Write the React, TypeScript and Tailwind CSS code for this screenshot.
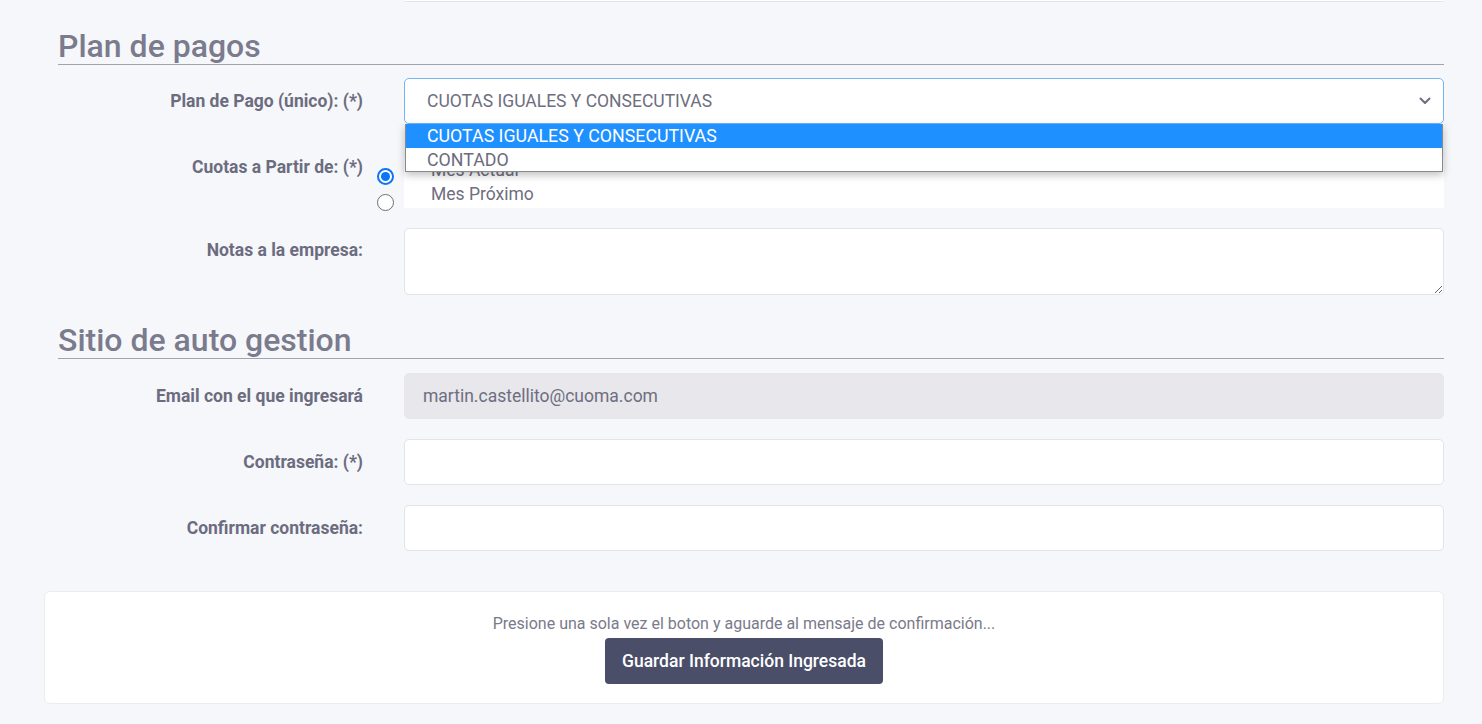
import React from 'react';

const labelCls = "w-[360px] shrink-0 pr-[41px] text-right text-[17.5px] font-bold leading-[24px] text-[#6c6c7f]";
const inputCls = "h-[46px] flex-1 rounded-[5px] border border-[#e3e3ea] bg-white px-[18px] text-[17.5px] text-[#6e6e80] outline-none";

const SectionTitle: React.FC<{ title: string; className?: string }> = ({ title, className }) => (
    <div className={`pl-[14px] ${className ?? ''}`}>
        <h2 className="border-b border-[#a3a3ab] text-[32px] font-medium leading-[35px] text-[#7b7b8e]">{title}</h2>
    </div>
);

const App: React.FC = () => {
    return (
        <div className="min-h-[724px] w-full bg-[#f6f7fb] font-['Roboto',_'Liberation_Sans',_sans-serif]">
            <div className="ml-[44px] w-[1400px]">
                {/* tail of the field above */}
                <div className="flex">
                    <div className="w-[360px] shrink-0" />
                    <div className="h-[2px] flex-1 rounded-b-[5px] border-b border-[#e3e3ea] bg-white" />
                </div>

                <SectionTitle title="Plan de pagos" className="mt-[27px]" />

                {/* Plan de pago */}
                <div className="mt-[13px] flex items-center">
                    <label className={labelCls}>Plan de Pago (único): (*)</label>
                    <div className="relative flex-1">
                        <div className="flex h-[46px] items-center justify-between rounded-[5px] border border-[#74b6f2] bg-white pl-[22px] pr-[12px] text-[17.5px] text-[#6e6e80]">
                            <span className="pt-[1px]">CUOTAS IGUALES Y CONSECUTIVAS</span>
                            <svg width="12" height="8" viewBox="0 0 12 8" fill="none">
                                <path d="M1.5 1.5L6 6l4.5-4.5" stroke="#6e6e80" strokeWidth="2" strokeLinecap="round" strokeLinejoin="round" />
                            </svg>
                        </div>
                        <ul className="absolute left-[1px] right-[1px] top-[46px] z-10 border-x border-b border-[#8a8a8a] bg-white text-[17.8px] leading-[23.5px] shadow-[0_3px_8px_rgba(0,0,0,0.25)]">
                            <li className="bg-[#1e90ff] pl-[21px] text-white">CUOTAS IGUALES Y CONSECUTIVAS</li>
                            <li className="pl-[21px] text-[#6b6b7b]">CONTADO</li>
                        </ul>
                    </div>
                </div>

                {/* Cuotas a partir de */}
                <div className="mt-[34px] flex items-start">
                    <label className={`${labelCls} -mt-[3px]`}>Cuotas a Partir de: (*)</label>
                    <div className="flex-1 bg-white pb-[2px] pl-[27px] text-[17.5px] text-[#6e6e80]">
                        {['Mes Actual', 'Mes Próximo'].map((opt, i) => (
                            <label key={opt} className="flex h-[24px] items-start leading-[24px]">
                                <span
                                    className={`-ml-[54px] mr-[37px] flex h-[17px] w-[17px] shrink-0 items-center justify-center rounded-full border ${i === 0 ? 'mt-[10px] border-[2px] border-[#0b75f5]' : 'mt-[12px] border-[#6f6f6f]'} bg-white`}
                                >
                                    {i === 0 && <span className="h-[9px] w-[9px] rounded-full bg-[#0b75f5]" />}
                                </span>
                                {opt}
                            </label>
                        ))}
                    </div>
                </div>

                {/* Notas */}
                <div className="mt-[20px] flex items-start">
                    <label className={`${labelCls} pt-[10px]`}>Notas a la empresa:</label>
                    <textarea className="h-[67px] flex-1 rounded-[5px] border border-[#e3e3ea] bg-white px-[18px] py-[8px] text-[17.5px] text-[#6e6e80] outline-none" />
                </div>

                <SectionTitle title="Sitio de auto gestion" className="mt-[28px]" />

                <div className="mt-[14px] flex items-center">
                    <label className={labelCls}>Email con el que ingresará</label>
                    <input
                        readOnly
                        value="martin.castellito@cuoma.com"
                        className="h-[46px] flex-1 rounded-[5px] border border-[#e6e6eb] bg-[#e7e7ec] px-[18px] text-[17.5px] text-[#6e6e80] outline-none"
                    />
                </div>

                <div className="mt-[20px] flex items-center">
                    <label className={labelCls}>Contraseña: (*)</label>
                    <input type="password" className={inputCls} />
                </div>

                <div className="mt-[20px] flex items-center">
                    <label className={labelCls}>Confirmar contraseña:</label>
                    <input type="password" className={inputCls} />
                </div>

                {/* Submit card */}
                <div className="mt-[40px] flex flex-col items-center rounded-[6px] border border-[#ececf0] bg-white pb-[19px] pt-[21px]">
                    <p className="text-[16px] leading-[22px] text-[#7a7a8a]">
                        Presione una sola vez el boton y aguarde al mensaje de confirmación...
                    </p>
                    <button
                        type="button"
                        className="mt-[3px] h-[46px] w-[278px] rounded-[4px] bg-[#4a4e69] text-[17.5px] font-medium text-white"
                    >
                        Guardar Información Ingresada
                    </button>
                </div>
            </div>
        </div>
    );
};

export default App;
